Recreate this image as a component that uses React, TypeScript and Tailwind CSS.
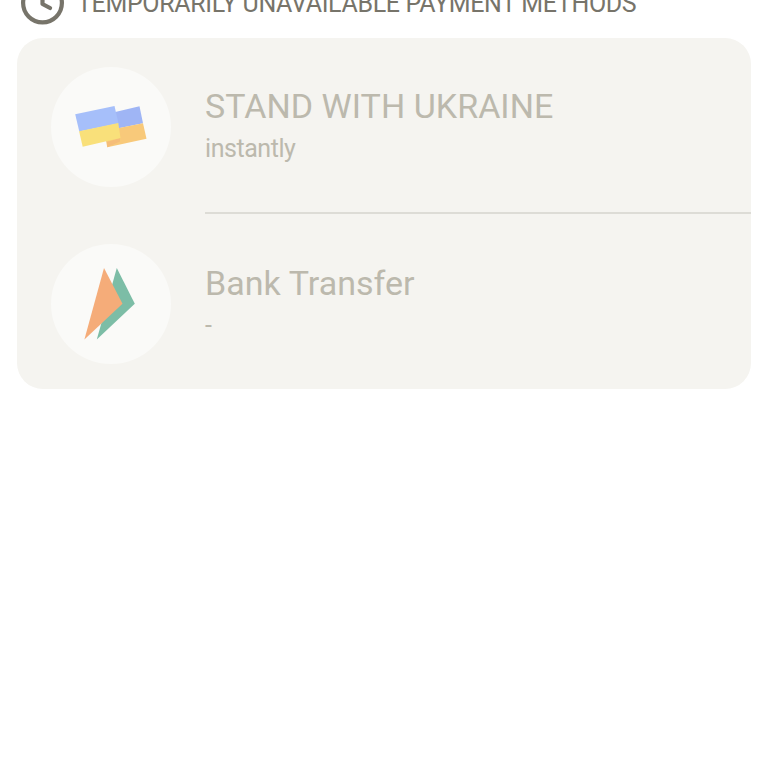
import type { ReactNode } from "react";

interface MethodProps {
  title: string;
  note: string;
  icon: ReactNode;
  divider?: boolean;
}

const FlagsIcon = () => (
  <svg width="120" height="120" viewBox="0 0 120 120">
    <path d="M60 46L88.5 39.3L92 56.3L64 62Z" fill="#9fb5f5" />
    <path d="M53 64L92 56.3L95.5 71.7L56.3 80.3Z" fill="#f8c97a" />
    <path d="M56 75L69 71V74.5L56.3 80.3Z" fill="#f5bd79" />
    <path d="M24.2 47.3L63.5 39L67.5 56.5L28.3 64.5Z" fill="#a6bffa" />
    <path d="M28.1 64.2L67.3 56L69.5 71L31.7 79.7Z" fill="#f9e07a" />
  </svg>
);

const TransferIcon = () => (
  <svg width="120" height="120" viewBox="0 0 120 120">
    <path d="M65.8 24L83.8 59.7L45.8 95.5Z" fill="#7cbda6" />
    <path d="M53 24L71.5 59.7L33.4 95.5Z" fill="#f5ac79" />
  </svg>
);

const Method = ({ title, note, icon, divider }: MethodProps) => (
  <div className="flex h-[177px] pl-[34px]">
    <div className="mt-[29px] size-[120px] shrink-0 rounded-full bg-[#fafaf8]">
      {icon}
    </div>
    <div className="ml-[34px] flex flex-1 flex-col pt-[46px] text-[#bcb9ad]">
      <h3 className="text-[34px] leading-[44px] tracking-[0.04px]">{title}</h3>
      <p className="mt-px text-[25px] leading-[40px] tracking-[-0.45px]">{note}</p>
      {divider && <div className="mt-auto mb-px h-[2px] bg-[#dddcd6]" />}
    </div>
  </div>
);

export default function App() {
  return (
    <main className="h-screen overflow-hidden bg-white font-[Roboto,sans-serif]">
      <header className="flex h-[38px] text-[#77746a]">
        <svg
          className="-mt-[19px] ml-[20px] shrink-0"
          width="44"
          height="44"
          viewBox="0 0 44 44"
          fill="none"
          stroke="currentColor"
          strokeWidth="4.2"
          strokeLinecap="round"
          strokeLinejoin="round"
        >
          <circle cx="22.5" cy="22" r="19.4" />
          <path d="M22.5 11V23L30 27" />
        </svg>
        <h2 className="-mt-[11px] ml-[13px] text-[25px] leading-[30px] tracking-[-0.34px] whitespace-nowrap">
          TEMPORARILY UNAVAILABLE PAYMENT METHODS
        </h2>
      </header>
      <section className="ml-[17px] h-[351px] w-[734px] overflow-hidden rounded-[26px] bg-[#f5f4f0]">
        <Method title="STAND WITH UKRAINE" note="instantly" icon={<FlagsIcon />} divider />
        <Method title="Bank Transfer" note="-" icon={<TransferIcon />} />
      </section>
    </main>
  );
}
